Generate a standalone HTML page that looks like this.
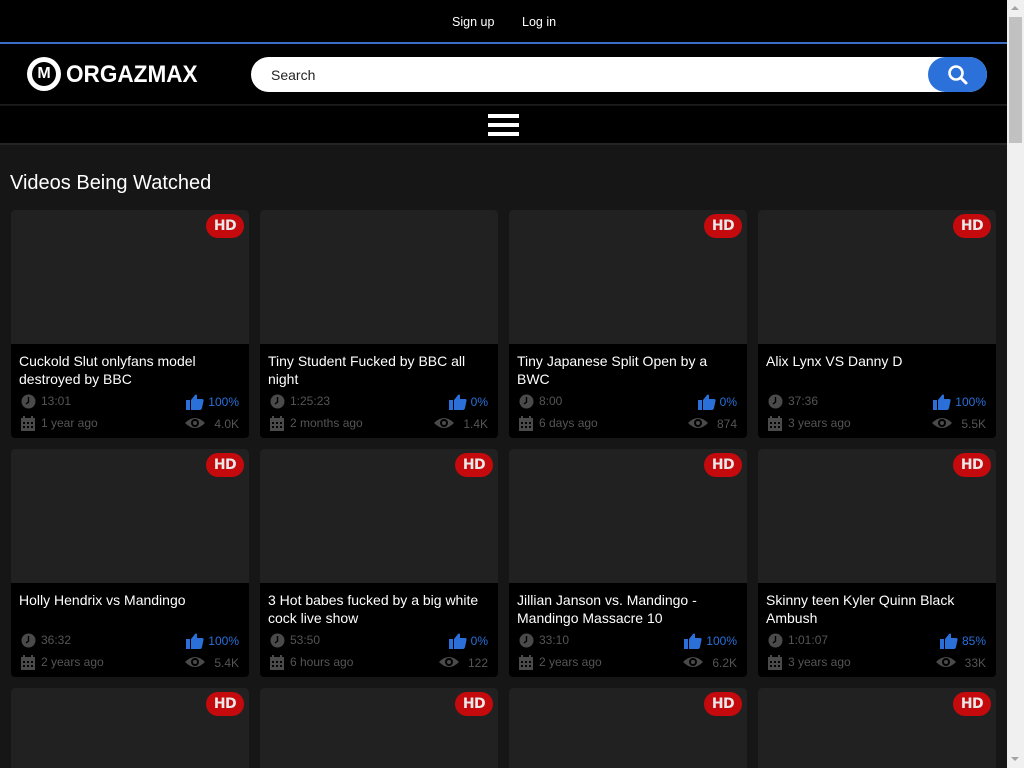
<!DOCTYPE html>
<html><head><meta charset="utf-8"><style>
*{margin:0;padding:0;box-sizing:border-box}
html,body{width:1024px;height:768px;overflow:hidden}
body{background:#161616;font-family:"Liberation Sans",Arial,sans-serif;color:#fff;position:relative}
.sb{position:absolute;left:1007px;top:0;width:17px;height:768px;background:#f0f0f0}
.sb .th{position:absolute;left:2px;top:17px;width:13px;height:126px;background:#c1c1c1}
.sb .up{position:absolute;left:4px;top:6px;width:0;height:0;border-left:4px solid transparent;border-right:4px solid transparent;border-bottom:4px solid #a3a3a3}
.sb .dn{position:absolute;left:4px;top:757px;width:0;height:0;border-left:4px solid transparent;border-right:4px solid transparent;border-top:4px solid #a3a3a3}
.top{position:absolute;left:0;top:0;width:1007px;height:42px;background:#000;font-size:12.5px}
.top a{position:absolute;top:15px;color:#fff;text-decoration:none}
.blue{position:absolute;left:0;top:42px;width:1007px;height:2px;background:#3a6cc8}
.hdr{position:absolute;left:0;top:44px;width:1007px;height:61px;background:#000;border-bottom:1px solid #1c1c1c}
.logo{position:absolute;left:27px;top:13px;width:34px;height:34px;border-radius:50%;background:#fff}
.logo i{position:absolute;left:5px;top:5px;width:24px;height:24px;border-radius:50%;background:#000;color:#fff;font-style:normal;font-weight:bold;font-size:16px;text-align:center;line-height:24px}
.logot{position:absolute;left:66px;top:18px;font-size:24px;line-height:26px;font-weight:bold;color:#fff;font-family:"Liberation Sans",sans-serif;transform:scaleX(.94);transform-origin:left}
.search{position:absolute;left:251px;top:13px;width:736px;height:35px;background:#fff;border-radius:18px}
.search span{position:absolute;left:20px;top:10px;color:#222;font-size:14px}
.btn{position:absolute;right:0;top:0;width:59px;height:35px;background:#2b71d9;border-radius:18px}
.nav{position:absolute;left:0;top:106px;width:1007px;height:39px;background:#000;border-bottom:2px solid #252525}
.burger{position:absolute;left:488px;top:8px;width:31px}
.burger b{display:block;height:4px;background:#fff;margin-bottom:5px}
h1{position:absolute;left:10px;top:172px;font-size:20px;font-weight:normal;color:#fff}
.card{position:absolute;width:238px;height:228px;background:#000;border-radius:4px;overflow:hidden}
.card .tb{position:absolute;left:0;top:0;width:100%;height:134px;background:#212121}
.hd{position:absolute;right:5px;top:4px;width:38px;height:24px;border-radius:12px;background:#c40a0c;color:#e8e8e8;font-weight:bold;font-size:14px;text-align:center;line-height:24px;font-family:"DejaVu Sans",sans-serif;letter-spacing:-0.5px}
.tt{position:absolute;left:8px;top:142px;width:220px;font-size:14px;line-height:18px;color:#fff}
.m{position:absolute;font-size:12px;color:#555}
.r{color:#2b6fd8}
svg{position:absolute}
</style></head><body>
<div class="top"><a style="left:452px">Sign up</a><a style="left:522px">Log in</a></div>
<div class="blue"></div>
<div class="hdr">
<div class="logo"><i>M</i></div>
<div class="logot">ORGAZMAX</div>
<div class="search"><span>Search</span><div class="btn"><svg width="59" height="35" viewBox="0 0 59 35"><circle cx="28" cy="16" r="6.5" fill="none" stroke="#fff" stroke-width="2.6"/><line x1="33" y1="21" x2="38" y2="26" stroke="#fff" stroke-width="3" stroke-linecap="round"/></svg></div></div>
</div>
<div class="nav"><div class="burger"><b></b><b></b><b></b></div></div>
<h1>Videos Being Watched</h1>
<div id="g"></div>
<div class="sb"><div class="up"></div><div class="th"></div><div class="dn"></div></div>
<script>
var d=[["Cuckold Slut onlyfans model destroyed by BBC","13:01","100%","1 year ago","4.0K",1],
["Tiny Student Fucked by BBC all night","1:25:23","0%","2 months ago","1.4K",0],
["Tiny Japanese Split Open by a BWC","8:00","0%","6 days ago","874",1],
["Alix Lynx VS Danny D","37:36","100%","3 years ago","5.5K",1],
["Holly Hendrix vs Mandingo","36:32","100%","2 years ago","5.4K",1],
["3 Hot babes fucked by a big white cock live show","53:50","0%","6 hours ago","122",1],
["Jillian Janson vs. Mandingo - Mandingo Massacre 10","33:10","100%","2 years ago","6.2K",1],
["Skinny teen Kyler Quinn Black Ambush","1:01:07","85%","3 years ago","33K",1],
["","","","","",1],["","","","","",1],["","","","","",1],["","","","","",1]];
var xs=[11,260,509,758],h="";
var clock='<svg width="15" height="15" viewBox="0 0 15 15" style="left:2px;top:0"><circle cx="7.5" cy="7.5" r="7" fill="#4a4a4a"/><path d="M7.5 3v5l-2.5 2" stroke="#000" stroke-width="1.4" fill="none"/></svg>';
var cal='<svg width="16" height="15" viewBox="0 0 16 15" style="left:1px;top:0"><rect x="1" y="2" width="14" height="13" fill="#4a4a4a"/><g fill="#000"><rect x="3" y="6" width="2" height="2"/><rect x="7" y="6" width="2" height="2"/><rect x="11" y="6" width="2" height="2"/><rect x="3" y="10" width="2" height="2"/><rect x="7" y="10" width="2" height="2"/><rect x="11" y="10" width="2" height="2"/></g><rect x="3" y="0" width="2" height="3" fill="#4a4a4a"/><rect x="11" y="0" width="2" height="3" fill="#4a4a4a"/></svg>';
var thumb='<svg width="18" height="16" viewBox="0 0 18 16" style="top:-1px;left:-22px"><rect x="0" y="6" width="4" height="10" fill="#2b6fd8"/><path d="M5 6 L9 1 Q10 0 11 1 L11 5 L16 5 Q18 5 17.5 7 L16 14 Q15.5 16 14 16 L5 16Z" fill="#2b6fd8"/></svg>';
var eye='<svg width="22" height="14" viewBox="0 0 22 14" style="top:-1px;left:-30px"><path d="M1 7 Q11 -3 21 7 Q11 17 1 7Z" fill="#4a4a4a"/><circle cx="11" cy="7" r="4" fill="#000"/><circle cx="11" cy="7" r="2" fill="#4a4a4a"/></svg>';
d.forEach(function(c,i){var x=xs[i%4],y=210+Math.floor(i/4)*239;
h+='<div class="card" style="left:'+x+'px;top:'+y+'px"><div class="tb"></div>'+(c[5]?'<div class="hd">HD</div>':'')+
'<div class="tt">'+c[0]+'</div>';
if(c[1]){h+='<div class="m" style="left:8px;top:184px;width:100px">'+clock+'<span style="margin-left:22px">'+c[1]+'</span></div>'+
'<div class="m" style="left:8px;top:206px;width:120px">'+cal+'<span style="margin-left:22px">'+c[3]+'</span></div>'+
'<div class="m r" style="right:10px;top:185px">'+thumb+c[2]+'</div>'+
'<div class="m" style="right:10px;top:207px">'+eye+c[4]+'</div>';}
h+='</div>';});
document.getElementById('g').innerHTML=h;
</script>
</body></html>
